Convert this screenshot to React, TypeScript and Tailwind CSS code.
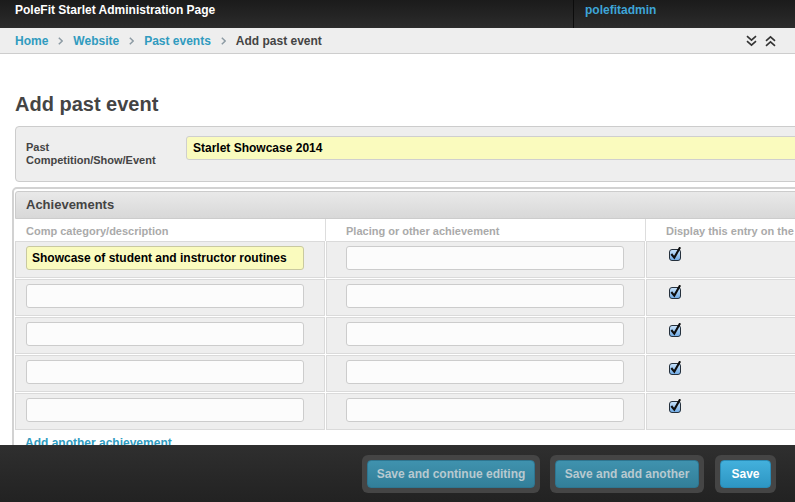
import React from "react";

const Sep = () => (
  <svg width="5" height="8" viewBox="0 0 5 8" className="mx-[10px]">
    <path d="M0.8 0.8 L4.2 4 L0.8 7.2" fill="none" stroke="#8c9aa3" strokeWidth="1.5" />
  </svg>
);

const DoubleDown = () => (
  <svg width="11" height="12" viewBox="0 0 11 12">
    <path d="M1 1.2 L5.5 5.2 L10 1.2 M1 6.2 L5.5 10.2 L10 6.2" fill="none" stroke="#333" strokeWidth="1.6" />
  </svg>
);

const DoubleUp = () => (
  <svg width="11" height="12" viewBox="0 0 11 12">
    <path d="M1 5.8 L5.5 1.8 L10 5.8 M1 10.8 L5.5 6.8 L10 10.8" fill="none" stroke="#333" strokeWidth="1.6" />
  </svg>
);

const Check = ({ id }: { id: string }) => (
  <svg width="14" height="14" viewBox="0 0 14 14" className="block">
    <defs>
      <linearGradient id={id} x1="0" y1="0" x2="0" y2="1">
        <stop offset="0" stopColor="#c9e3fb" />
        <stop offset="1" stopColor="#6ea9e4" />
      </linearGradient>
    </defs>
    <rect x="1.5" y="2.5" width="11" height="11" rx="2.5" fill={`url(#${id})`} stroke="#25303c" />
    <path d="M4 7.8 L6.3 10.6 L11.6 1.2" fill="none" stroke="#0d0d0d" strokeWidth="2.1" strokeLinecap="square" />
  </svg>
);

const rows = [
  "Showcase of student and instructor routines",
  "",
  "",
  "",
  "",
];

export default function App() {
  return (
    <div className="relative w-[795px] h-[502px] overflow-hidden bg-white [font-family:'Liberation_Sans',Arial,Helvetica,sans-serif]">
      {/* top header */}
      <div className="flex h-[28px] bg-gradient-to-b from-[#1b1b1b] to-[#2c2c2c]">
        <div className="w-[573px] shrink-0 pl-[15px] pt-[3px] text-[12px] leading-[15px] font-bold text-white">
          PoleFit Starlet Administration Page
        </div>
        <div className="flex-1 border-l border-[#0c0c0c] pl-[11px] pt-[3px] text-[12px] leading-[15px] font-bold text-[#3ea5d8]">
          polefitadmin
        </div>
      </div>

      {/* breadcrumbs */}
      <div className="flex items-center h-[26px] border-b border-[#cdcdcd] bg-[#eeeeee] pl-[15px] pr-[19px] pt-[1px] text-[12px] leading-[24px] font-bold">
        <span className="text-[#309bbf]">Home</span>
        <Sep />
        <span className="text-[#309bbf]">Website</span>
        <Sep />
        <span className="text-[#309bbf]">Past events</span>
        <Sep />
        <span className="text-[#444]">Add past event</span>
        <div className="ml-auto flex items-center gap-[8px]">
          <DoubleDown />
          <DoubleUp />
        </div>
      </div>

      {/* title */}
      <h1 className="mt-[38px] ml-[15px] text-[20px] leading-[24px] font-bold text-[#444]">Add past event</h1>

      {/* main fieldset */}
      <div className="mt-[10px] ml-[15px] flex w-[900px] h-[56px] rounded-[4px] border border-[#cccccc] bg-[#eeeeee]">
        <div className="w-[170px] shrink-0 pl-[10px] pt-[14px] text-[11px] leading-[13px] font-bold text-[#444]">
          Past
          <br />
          Competition/Show/Event
        </div>
        <div className="pt-[9px]">
          <div className="w-[700px] h-[24px] rounded-[3px] border border-[#cfcfcf] bg-[#fafbbe] pl-[6px] text-[12px] leading-[22px] font-bold text-black">
            Starlet Showcase 2014
          </div>
        </div>
      </div>

      {/* achievements inline */}
      <div className="mt-[5px] ml-[12px] w-[900px] rounded-[5px] border-2 border-[#d2d2d2] pt-[2px] pl-[1px]">
        <div className="h-[28px] rounded-t-[3px] border border-[#cccccc] bg-gradient-to-b from-[#e9e9e9] to-[#d8d8d8] pl-[10px] text-[13px] leading-[26px] font-bold text-[#444]">
          Achievements
        </div>
        <div className="flex h-[22px] bg-white text-[11px] leading-[22px] font-bold text-[#aaaaaa]">
          <div className="w-[310px] shrink-0 pl-[11px] pt-[1px]">Comp category/description</div>
          <div className="w-[320px] shrink-0 border-l border-[#dddddd] pl-[20px] pt-[1px]">Placing or other achievement</div>
          <div className="flex-1 border-l border-[#dddddd] pl-[20px] pt-[1px] whitespace-nowrap">Display this entry on the website</div>
        </div>
        <div className="flex flex-col gap-[1px]">
          {rows.map((val, i) => (
            <div key={i} className="flex gap-[1px] h-[37px]">
              <div className="w-[310px] shrink-0 border border-[#dadada] bg-[#eeeeee] pl-[10px] pt-[4px]">
                <div
                  className={`w-[278px] h-[24px] rounded-[3px] border pl-[5px] text-[12px] leading-[22px] font-bold text-black ${
                    val ? "border-[#c9c9a0] bg-[#fafbbe]" : "border-[#cccccc] bg-[#fcfcfc]"
                  }`}
                >
                  {val}
                </div>
              </div>
              <div className="w-[319px] shrink-0 border border-[#dadada] bg-[#eeeeee] pl-[19px] pt-[4px]">
                <div className="w-[278px] h-[24px] rounded-[3px] border border-[#cccccc] bg-[#fcfcfc]" />
              </div>
              <div className="flex-1 border border-[#dadada] bg-[#eeeeee] pl-[21px] pt-[5px]">
                <Check id={`cb${i}`} />
              </div>
            </div>
          ))}
        </div>
        <div className="mt-[6px] pl-[10px] pb-[20px] text-[12px] leading-[15px] font-bold text-[#309bbf]">
          Add another achievement
        </div>
      </div>

      {/* submit row (fixed footer) */}
      <div className="absolute bottom-0 left-0 right-0 h-[57px] flex items-start justify-end pt-[10px] pr-[19px] bg-gradient-to-b from-[#2f2f2f] to-[#222222]">
        <div className="rounded-[6px] bg-[#454545] p-[5px]">
          <div className="w-[168px] h-[28px] rounded-[4px] border border-[#2e7590] bg-gradient-to-b from-[#3f92ae] to-[#327f99] text-center text-[12px] leading-[26px] font-bold text-[#b7c9d0]">
            Save and continue editing
          </div>
        </div>
        <div className="ml-[10px] rounded-[6px] bg-[#454545] p-[5px]">
          <div className="w-[144px] h-[28px] rounded-[4px] border border-[#2e7590] bg-gradient-to-b from-[#3f92ae] to-[#327f99] text-center text-[12px] leading-[26px] font-bold text-[#b7c9d0]">
            Save and add another
          </div>
        </div>
        <div className="ml-[11px] rounded-[6px] bg-[#454545] p-[5px]">
          <div className="w-[51px] h-[28px] rounded-[4px] border border-[#2a8bb6] bg-gradient-to-b from-[#43b0dc] to-[#2d96c3] text-center text-[12px] leading-[26px] font-bold text-white">
            Save
          </div>
        </div>
      </div>
    </div>
  );
}
